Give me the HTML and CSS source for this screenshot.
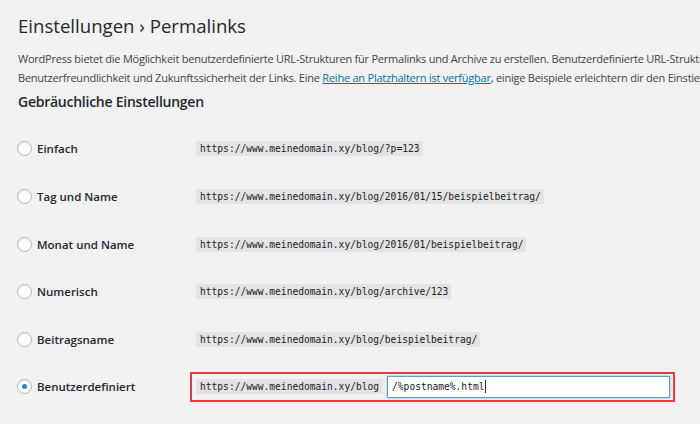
FILE: index.html
```html
<!DOCTYPE html>
<html lang="de">
<head>
<meta charset="utf-8">
<title>Einstellungen › Permalinks</title>
<link rel="stylesheet" href="styles.css">
</head>
<body>
<div class="wrap">
  <h1 class="title">Einstellungen › Permalinks</h1>
  <p class="intro">WordPress bietet die Möglichkeit benutzerdefinierte URL-Strukturen für Permalinks und Archive zu erstellen. Benutzerdefinierte URL-Strukturen verbessern die Ästhetik,<br>Benutzerfreundlichkeit und Zukunftssicherheit der Links. Eine <a href="#" class="link">Reihe an Platzhaltern ist verfügbar</a>, einige Beispiele erleichtern dir den Einstieg.</p>
  <h2 class="section">Gebräuchliche Einstellungen</h2>
  <div class="options">
    <div class="row">
      <label class="opt"><span class="radio"></span><span class="label">Einfach</span></label>
      <div class="value"><code class="code">https://www.meinedomain.xy/blog/?p=123</code></div>
    </div>
    <div class="row">
      <label class="opt"><span class="radio"></span><span class="label">Tag und Name</span></label>
      <div class="value"><code class="code">https://www.meinedomain.xy/blog/2016/01/15/beispielbeitrag/</code></div>
    </div>
    <div class="row">
      <label class="opt"><span class="radio"></span><span class="label">Monat und Name</span></label>
      <div class="value"><code class="code">https://www.meinedomain.xy/blog/2016/01/beispielbeitrag/</code></div>
    </div>
    <div class="row">
      <label class="opt"><span class="radio"></span><span class="label">Numerisch</span></label>
      <div class="value"><code class="code">https://www.meinedomain.xy/blog/archive/123</code></div>
    </div>
    <div class="row">
      <label class="opt"><span class="radio"></span><span class="label">Beitragsname</span></label>
      <div class="value"><code class="code">https://www.meinedomain.xy/blog/beispielbeitrag/</code></div>
    </div>
    <div class="row">
      <label class="opt"><span class="radio checked"></span><span class="label">Benutzerdefiniert</span></label>
      <div class="value">
        <div class="highlight">
          <code class="code">https://www.meinedomain.xy/blog</code>
          <div class="input"><span class="input-text">/%postname%.html</span><span class="caret"></span></div>
        </div>
      </div>
    </div>
  </div>
</div>
</body>
</html>
```
FILE: styles.css
```css
html, body {
  margin: 0;
  padding: 0;
}
body {
  background: #f1f1f1;
  color: #444;
  font-family: "Open Sans", "Noto Sans", sans-serif;
  overflow: hidden;
  width: 700px;
  height: 424px;
}
.wrap {
  padding: 0 0 0 18px;
}
.title {
  margin: 13px 0 0;
  font-size: 18.6px;
  line-height: 26px;
  font-weight: 400;
  color: #23282d;
  white-space: nowrap;
}
.intro {
  margin: 9.8px 0 0;
  font-size: 11px;
  letter-spacing: -0.23px;
  line-height: 19.3px;
  color: #444;
  white-space: nowrap;
}
.link {
  color: #0073aa;
  text-decoration: underline;
}
.section {
  margin: 4.8px 0 0;
  font-size: 14px;
  letter-spacing: -0.25px;
  line-height: 20px;
  font-weight: 600;
  color: #23282d;
}
.options {
  margin-top: 13px;
  display: flex;
  flex-direction: column;
}
.row {
  height: 47.6px;
  display: grid;
  grid-template-columns: 178px 1fr;
  align-items: center;
}
.opt {
  display: flex;
  align-items: center;
  gap: 5px;
  margin-left: -1px;
}
.radio {
  width: 13px;
  height: 13px;
  border: 1px solid #b4b9be;
  border-radius: 50%;
  background: #fff;
  box-shadow: inset 0 1px 2px rgba(0,0,0,0.1);
  display: flex;
  align-items: center;
  justify-content: center;
  flex: none;
}
.radio.checked::before {
  content: "";
  width: 5px;
  height: 5px;
  border-radius: 50%;
  background: #1e8cbe;
}
.label {
  font-size: 11.5px;
  font-weight: 600;
  color: #23282d;
}
.value {
  display: flex;
  align-items: center;
}
.code {
  font-family: "DejaVu Sans Mono", "Liberation Mono", monospace;
  font-size: 9.6px;
  line-height: 11px;
  padding: 2px 3px 2px 4px;
  background: #e3e3e3;
  color: #222;
  white-space: nowrap;
}
.highlight {
  margin-left: -6px;
  border: 2px solid #f0383c;
  padding: 2px 3px 2px 4px;
  display: flex;
  align-items: center;
  gap: 4px;
}
.highlight .code {
  padding-right: 4px;
}
.input {
  width: 283px;
  height: 22px;
  box-sizing: border-box;
  border: 1px solid #5b9dd9;
  box-shadow: 0 0 2px rgba(30,140,190,0.6);
  background: #fff;
  display: flex;
  align-items: center;
  padding-left: 4px;
}
.input-text {
  font-family: "DejaVu Sans Mono", "Liberation Mono", monospace;
  font-size: 9.6px;
  color: #222;
}
.caret {
  width: 1px;
  height: 13px;
  background: #32373c;
  margin-left: 1px;
}
```
